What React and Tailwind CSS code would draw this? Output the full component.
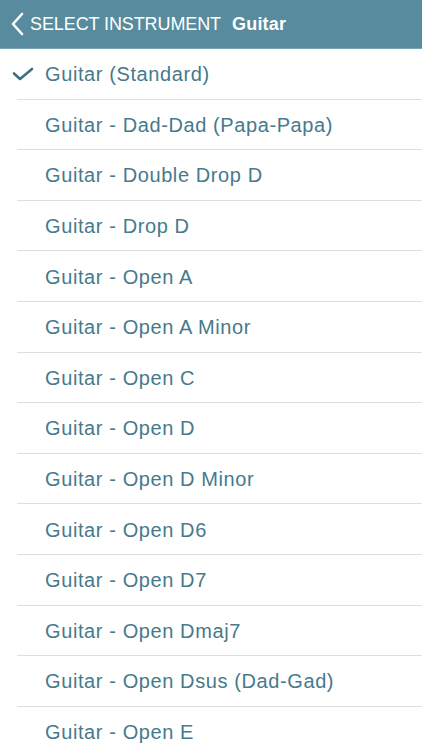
import { useState } from "react"

const tunings = [
  "Guitar (Standard)",
  "Guitar - Dad-Dad (Papa-Papa)",
  "Guitar - Double Drop D",
  "Guitar - Drop D",
  "Guitar - Open A",
  "Guitar - Open A Minor",
  "Guitar - Open C",
  "Guitar - Open D",
  "Guitar - Open D Minor",
  "Guitar - Open D6",
  "Guitar - Open D7",
  "Guitar - Open Dmaj7",
  "Guitar - Open Dsus (Dad-Gad)",
  "Guitar - Open E",
]

export default function App() {
  const [selected, setSelected] = useState(0)

  return (
    <div className="h-[750px] overflow-hidden bg-white font-['Liberation_Sans',Arial,sans-serif]">
      {/* Header */}
      <div className="h-[49px] bg-[#578b9d] border-b border-[#7aa5b4] flex items-center pl-[10px] text-white">
        <svg width="14" height="24" viewBox="0 0 14 24" className="shrink-0">
          <path d="M12 2 L3 12 L12 22" fill="none" stroke="white" strokeWidth="2.6" strokeLinecap="round" strokeLinejoin="round" />
        </svg>
        <span className="ml-[6px] text-[18px] tracking-[-0.1px]">SELECT INSTRUMENT</span>
        <span className="ml-[11px] text-[18px] font-bold tracking-[0.2px]">Guitar</span>
      </div>

      {/* List */}
      <ul>
        {tunings.map((name, i) => (
          <li
            key={name}
            onClick={() => setSelected(i)}
            className="h-[50.6px] flex items-center relative cursor-pointer"
          >
            <div className="w-[45px] shrink-0 flex justify-center pl-[1px]">
              {selected === i && (
                <svg width="22" height="14" viewBox="0 0 22 14">
                  <path d="M2 6.5 L8 12 L20 2" fill="none" stroke="#3d6f82" strokeWidth="2.6" strokeLinecap="round" strokeLinejoin="round" />
                </svg>
              )}
            </div>
            <span className="text-[20px] tracking-[0.6px] text-[#467a8c]">{name}</span>
            <div className="absolute bottom-0 left-[17px] right-0 h-px bg-[#dedede]" />
          </li>
        ))}
      </ul>
    </div>
  )
}
